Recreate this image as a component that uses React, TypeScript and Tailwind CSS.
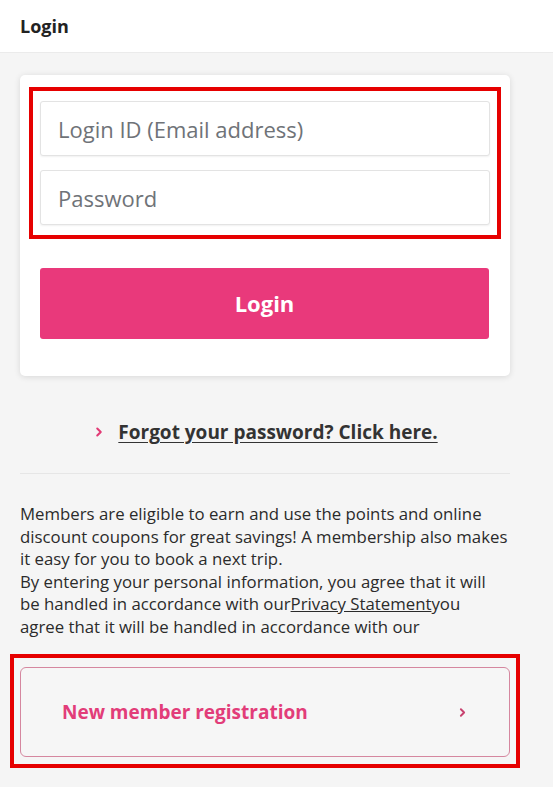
import { ChevronRight } from "lucide-react";

const font = { fontFamily: '"Open Sans", "Noto Sans", sans-serif' };

export default function App() {
  return (
    <div className="min-h-[787px] bg-[#f5f5f5] text-[#333]" style={font}>
      <header className="flex h-[53px] items-center border-b border-[#ebebeb] bg-white px-5">
        <h1 className="text-[18px] font-bold text-[#222]">Login</h1>
      </header>

      <main className="w-[510px] pl-5 pt-[22px]">
        <section className="rounded-[5px] bg-white px-[9px] pb-[37px] pt-3 shadow-[0_1px_6px_rgba(0,0,0,0.12)]">
          <div className="flex flex-col gap-[14px] border-4 border-[#e60000] px-[7px] py-[10px]">
            <input
              type="email"
              placeholder="Login ID (Email address)"
              className="h-[55px] w-full rounded-[3px] border border-[#e3e3e3] bg-white px-[17px] text-[22px] text-[#333] shadow-[0_1px_2px_rgba(0,0,0,0.06)] outline-none placeholder:text-[#6f7378]"
            />
            <input
              type="password"
              placeholder="Password"
              className="h-[55px] w-full rounded-[3px] border border-[#e3e3e3] bg-white px-[17px] text-[22px] text-[#333] shadow-[0_1px_2px_rgba(0,0,0,0.06)] outline-none placeholder:text-[#6f7378]"
            />
          </div>
          <button
            type="button"
            className="mx-[11px] mt-[29px] flex h-[71px] w-[449px] items-center justify-center rounded-[3px] bg-[#e9397b] text-[22px] font-bold text-white"
          >
            Login
          </button>
        </section>

        <div className="flex items-center justify-center gap-[12px] border-b border-[#e6e6e6] pb-[29px] pt-[44px] leading-[24px]">
          <ChevronRight className="size-[14px] text-[#e23a75]" strokeWidth={3.5} aria-hidden="true" />
          <a href="#" className="text-[19px] font-bold text-[#333] underline underline-offset-[3px]">
            Forgot your password? Click here.
          </a>
        </div>

        <p className="-mr-[4px] mt-[29px] text-[16.8px] leading-[22.5px] text-[#2b2b2b]">
          Members are eligible to earn and use the points and online discount coupons for great savings! A membership also makes it easy for you to book a next trip.
          <br />
          By entering your personal information, you agree that it will
          <br />
          be handled in accordance with our
          <a href="#" className="underline">Privacy Statement</a>
          you
          <br />
          agree that it will be handled in accordance with our
        </p>

        <div className="-mx-[10px] mt-[16px] border-4 border-[#e60000] px-[6px] pb-[7px] pt-[9px]">
          <button
            type="button"
            className="flex h-[90px] w-full items-center justify-between rounded-[6px] border border-[#d5879f] bg-[#f6f6f6] pl-[41px] pr-[40px] text-left"
          >
            <span className="text-[19px] font-bold text-[#e23d79]">New member registration</span>
            <ChevronRight className="size-[13px] text-[#c8426f]" strokeWidth={3.5} aria-hidden="true" />
          </button>
        </div>
      </main>
    </div>
  );
}
